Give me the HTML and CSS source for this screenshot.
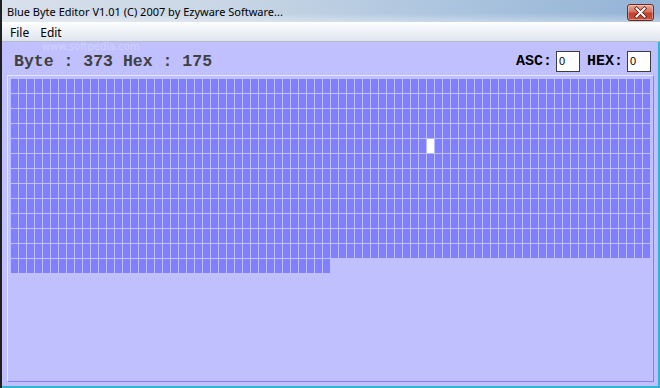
FILE: index.html
```html
<!DOCTYPE html>
<html>
<head>
<meta charset="utf-8">
<title>Blue Byte Editor</title>
<link rel="stylesheet" href="styles.css">
</head>
<body>
<div class="window">
  <div class="titlebar">
    <span class="title">Blue Byte Editor V1.01 (C) 2007 by Ezyware Software...</span>
    <span class="close">
      <svg width="25" height="15" viewBox="0 0 25 15">
        <path d="M8.5 3.5 L16.5 11.5 M16.5 3.5 L8.5 11.5" stroke="#5a1a10" stroke-width="3.6" stroke-linecap="square"/>
        <path d="M8.5 3.5 L16.5 11.5 M16.5 3.5 L8.5 11.5" stroke="#ffffff" stroke-width="2" stroke-linecap="square"/>
      </svg>
    </span>
  </div>
  <div class="menubar">
    <span class="menu-item">File</span>
    <span class="menu-item">Edit</span>
  </div>
  <div class="client">
    <div class="header">
      <span class="info">Byte : 373 Hex : 175</span>
      <div class="fields">
        <span class="label">ASC:</span>
        <span class="box">0</span>
        <span class="label label-hex">HEX:</span>
        <span class="box">0</span>
      </div>
    </div>
    <div class="panel">
      <div class="grid" id="grid"></div>
    </div>
  </div>
  <div class="watermark-url">www.softpedia.com</div>
</div>
<script src="app.js"></script>
</body>
</html>
```
FILE: styles.css
```css
html, body {
  margin: 0;
  padding: 0;
  width: 660px;
  height: 388px;
  overflow: hidden;
  background: #c0c0ff;
}

.window {
  position: relative;
  display: flex;
  flex-direction: column;
  width: 660px;
  height: 388px;
  box-sizing: border-box;
  border-left: 2px solid #1e2024;
}

.titlebar {
  height: 22px;
  flex: 0 0 22px;
  display: flex;
  align-items: center;
  justify-content: space-between;
  padding-left: 5px;
  box-sizing: border-box;
  background:
    linear-gradient(to bottom, rgba(255,255,255,0) 0%, rgba(255,255,255,0) 60%, rgba(255,255,255,0.35) 100%),
    linear-gradient(to right, #d8e0ea 0%, #c8d6e5 35%, #aac3de 70%, #93b3d6 100%);
}

.title {
  font-family: "Noto Sans", "Liberation Sans", sans-serif;
  font-size: 11px;
  color: #000;
  white-space: nowrap;
  padding-top: 1px;
}

.close {
  display: flex;
  width: 25px;
  height: 15px;
  margin-right: 6px;
  margin-top: 2px;
  border: 1px solid #6e2a1f;
  border-radius: 3px;
  box-sizing: content-box;
  background: linear-gradient(to bottom, #e9a99b 0%, #d9725f 45%, #c2402b 55%, #c9553b 100%);
  box-shadow: inset 0 0 0 1px rgba(255,255,255,0.35);
}

.menubar {
  height: 20px;
  flex: 0 0 20px;
  display: flex;
  align-items: center;
  padding-left: 2px;
  box-sizing: border-box;
  border-bottom: 1px solid #b4bcc8;
  background: linear-gradient(to bottom, #ffffff 0%, #f5f7fa 25%, #e9edf3 70%, #dfe5ee 100%);
}

.menu-item {
  font-family: "Noto Sans", "Liberation Sans", sans-serif;
  font-size: 12px;
  color: #000;
  padding: 1px 5px 0 6px;
}

.client {
  flex: 1;
  display: flex;
  flex-direction: column;
  background: #c0c0ff;
  border-right: 2px solid #2fb4d6;
  border-bottom: 2px solid #2fb4d6;
  min-height: 0;
}

.header {
  display: flex;
  justify-content: space-between;
  align-items: flex-start;
  height: 21px;
  padding: 9px 7px 0 12px;
  margin-bottom: 3px;
}

.info {
  font-family: "Liberation Mono", "Courier New", monospace;
  font-weight: bold;
  font-size: 16.5px;
  line-height: 17px;
  margin-top: 2px;
  color: #404040;
  white-space: pre;
}

.fields {
  display: flex;
  align-items: flex-start;
}

.label {
  font-family: "Liberation Mono", "Courier New", monospace;
  font-weight: bold;
  font-size: 15px;
  line-height: 21px;
  color: #000;
  margin-right: 4px;
}

.label-hex {
  margin-left: 7px;
}

.box {
  width: 24px;
  height: 21px;
  box-sizing: border-box;
  border: 1px solid #3c3c3c;
  background: #fff;
  font-family: "Liberation Sans", sans-serif;
  font-size: 11px;
  line-height: 19px;
  padding-left: 2px;
  color: #000;
}

.panel {
  flex: 1;
  margin: 0 4px 4px 5px;
  padding: 3px;
  border: 1px solid;
  border-color: #e4e4ff #8080ff #8080ff #e4e4ff;
  background: #c0c0ff;
}

.grid {
  display: grid;
  grid-template-columns: repeat(80, 7px);
  grid-auto-rows: 14px;
  gap: 1px;
}

.cell {
  background: #8080ff;
}

.cell.sel {
  background: #ffffff;
}

.watermark-url {
  position: absolute;
  left: 40px;
  top: 41px;
  font-family: "DejaVu Sans", sans-serif;
  font-size: 10px;
  line-height: 11px;
  color: rgba(255,255,255,0.3);
  pointer-events: none;
}
```
FILE: app.js
```js
(function () {
  var grid = document.getElementById('grid');
  var total = 1000;
  var selected = 372;
  var frag = document.createDocumentFragment();
  for (var i = 0; i < total; i++) {
    var c = document.createElement('div');
    c.className = i === selected ? 'cell sel' : 'cell';
    frag.appendChild(c);
  }
  grid.appendChild(frag);
})();
```
